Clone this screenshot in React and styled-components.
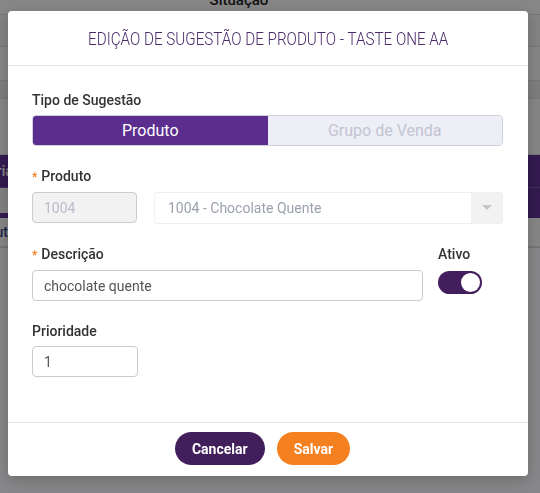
import React from "react";
import styled, { createGlobalStyle } from "styled-components";

const GlobalStyle = createGlobalStyle`
  html, body {
    margin: 0;
    padding: 0;
    height: 100%;
    overflow: hidden;
    font-family: Roboto, "Liberation Sans", Arial, sans-serif;
  }
  #root {
    height: 100%;
  }
`;

export default function App() {
  return (
    <>
      <GlobalStyle />
      <Page>
        <HeadRow>
          <HeadCell>Situação</HeadCell>
        </HeadRow>
        <Row tone="#f6f6f6" h={31} />
        <Row tone="#fbfbfb" h={33} />
        <Row tone="#ececec" h={17} />
        <Row tone="#fbfbfb" h={55} />
        <PurpleRow h={32}>
          <SideText light>Categoria</SideText>
        </PurpleRow>
        <SplitRow>
          <SplitLeft />
          <SplitRight />
        </SplitRow>
        <Row tone="#fbfbfb" h={28}>
          <SideText>Produtos</SideText>
        </Row>
        <Rest />
      </Page>

      <Overlay>
        <Modal>
          <ModalHeader>
            <Title>EDIÇÃO DE SUGESTÃO DE PRODUTO - TASTE ONE AA</Title>
          </ModalHeader>

          <ModalBody>
            <Field>
              <Label>Tipo de Sugestão</Label>
              <Segmented>
                <Segment active>Produto</Segment>
                <Segment>Grupo de Venda</Segment>
              </Segmented>
            </Field>

            <Field>
              <Label required>Produto</Label>
              <InlineRow>
                <Input width="105px" disabled value="1004" readOnly />
                <Select>
                  <SelectValue>1004 - Chocolate Quente</SelectValue>
                  <SelectArrow>
                    <Caret />
                  </SelectArrow>
                </Select>
              </InlineRow>
            </Field>

            <InlineRow gap="15px">
              <Field grow>
                <Label required>Descrição</Label>
                <Input value="chocolate quente" readOnly />
              </Field>
              <Field width="65px">
                <Label>Ativo</Label>
                <Switch checked>
                  <Knob />
                </Switch>
              </Field>
            </InlineRow>

            <Field>
              <Label>Prioridade</Label>
              <Input width="106px" value="1" readOnly />
            </Field>
          </ModalBody>

          <ModalFooter>
            <Button variant="cancel">Cancelar</Button>
            <Button variant="save">Salvar</Button>
          </ModalFooter>
        </Modal>
      </Overlay>
    </>
  );
}

/* background page (dimmed by the overlay) */

const Page = styled.div`
  display: flex;
  flex-direction: column;
  height: 100%;
  background: #fdfcff;
`;

const HeadRow = styled.div`
  height: 14px;
  display: flex;
  justify-content: center;
  align-items: flex-end;
  overflow: hidden;
  background: #fefefe;
  border-bottom: 1px solid #dcdcdc;
`;

const HeadCell = styled.span`
  font-size: 15px;
  font-weight: 500;
  color: #222;
  line-height: 20px;
  margin-bottom: 4px;
  margin-left: -62px;
`;

const Row = styled.div`
  height: ${(p) => p.h}px;
  background: ${(p) => p.tone};
  border-bottom: 1px solid #e0e0e0;
  display: flex;
  align-items: center;
  overflow: hidden;
`;

const PurpleRow = styled.div`
  height: ${(p) => p.h}px;
  background: #5e3194;
  border-bottom: 1px solid #7a58a8;
  display: flex;
  align-items: center;
  overflow: hidden;
`;

const SideText = styled.span`
  font-size: 14px;
  font-weight: 500;
  color: ${(p) => (p.light ? "#fff" : "#3a4a8a")};
  margin-left: ${(p) => (p.light ? "-48px" : "-34px")};
`;

const SplitRow = styled.div`
  height: 30px;
  display: flex;
`;

const SplitLeft = styled.div`
  width: 20px;
  background: #f4f4f4;
  border-bottom: 5px solid #5e3194;
`;

const SplitRight = styled.div`
  flex: 1;
  background: #5e3194;
`;

const Rest = styled.div`
  flex: 1;
  background: #fdfcff;
  border-top: 1px solid #d8d8d8;
`;

/* modal */

const Overlay = styled.div`
  position: fixed;
  inset: 0;
  background: rgba(0, 0, 0, 0.47);
  display: flex;
  align-items: flex-start;
  padding: 11px 0 0 8px;
`;

const Modal = styled.div`
  width: 520px;
  background: #fff;
  border-radius: 4px;
  box-shadow: 0 4px 14px rgba(0, 0, 0, 0.2);
  display: flex;
  flex-direction: column;
`;

const ModalHeader = styled.div`
  height: 54px;
  border-bottom: 1px solid #e5e5e5;
  display: flex;
  align-items: center;
  justify-content: center;
`;

const Title = styled.h2`
  margin: 0;
  font-size: 19px;
  font-weight: 300;
  color: #4a2a6a;
  white-space: nowrap;
  transform: scaleX(0.8);
`;

const ModalBody = styled.div`
  padding: 24px 25px 25px 24px;
  display: flex;
  flex-direction: column;
  gap: 20px;
  height: 356px;
  box-sizing: border-box;
`;

const Field = styled.div`
  display: flex;
  flex-direction: column;
  gap: 5px;
  ${(p) => p.grow && "flex: 1;"}
  ${(p) => p.width && `width: ${p.width}; flex-shrink: 0;`}
`;

const Label = styled.label`
  font-size: 14px;
  font-weight: 500;
  line-height: 20px;
  color: #333;

  &::before {
    content: ${(p) => (p.required ? '"*"' : "none")};
    color: #f58020;
    font-size: 12px;
    margin-right: 4px;
  }
`;

const Segmented = styled.div`
  display: grid;
  grid-template-columns: 1fr 1fr;
  height: 31px;
  border: 1px solid #cfd0da;
  border-radius: 4px;
  overflow: hidden;
  box-sizing: border-box;
`;

const Segment = styled.div`
  display: flex;
  align-items: center;
  justify-content: center;
  font-size: 16px;
  background: ${(p) => (p.active ? "#5b2d8e" : "#eeeef7")};
  color: ${(p) => (p.active ? "#fff" : "#c3c5d2")};
`;

const InlineRow = styled.div`
  display: flex;
  align-items: flex-start;
  gap: ${(p) => p.gap || "17px"};
`;

const Input = styled.input`
  box-sizing: border-box;
  width: ${(p) => p.width || "100%"};
  height: 31px;
  padding: 0 11px;
  font-family: inherit;
  font-size: 14px;
  color: #555;
  background: #fff;
  border: 1px solid #cccccc;
  border-radius: 4px;
  outline: none;

  &:disabled {
    background: #f2f2f2;
    color: #b8bccb;
  }
`;

const Select = styled.div`
  flex: 1;
  height: 32px;
  display: flex;
  border: 1px solid #efefef;
  border-radius: 3px;
  box-sizing: border-box;
  overflow: hidden;
`;

const SelectValue = styled.div`
  flex: 1;
  display: flex;
  align-items: center;
  padding-left: 13px;
  font-size: 14px;
  color: #9ba1ad;
`;

const SelectArrow = styled.div`
  width: 31px;
  background: #f2f2f2;
  display: flex;
  align-items: center;
  justify-content: center;
`;

const Caret = styled.span`
  width: 0;
  height: 0;
  border-left: 5px solid transparent;
  border-right: 5px solid transparent;
  border-top: 5px solid #c4c4c4;
  margin-top: -2px;
`;

const Switch = styled.div`
  width: 44px;
  height: 23px;
  border-radius: 12px;
  background: #431e5c;
  display: flex;
  align-items: center;
  justify-content: ${(p) => (p.checked ? "flex-end" : "flex-start")};
  padding: 0 2px;
  box-sizing: border-box;
  margin-top: 2px;
`;

const Knob = styled.span`
  width: 19px;
  height: 19px;
  border-radius: 50%;
  background: #fff;
`;

const ModalFooter = styled.div`
  height: 54px;
  border-top: 1px solid #e5e5e5;
  display: flex;
  align-items: center;
  justify-content: center;
  gap: 12px;
  padding-right: 11px;
  padding-bottom: 2px;
  box-sizing: border-box;
`;

const Button = styled.button`
  height: 33px;
  border: none;
  border-radius: 17px;
  padding: 0 17px;
  font-family: inherit;
  font-size: 14px;
  font-weight: 700;
  color: #fff;
  background: ${(p) => (p.variant === "save" ? "#f58020" : "#421e5a")};
  cursor: pointer;
`;
